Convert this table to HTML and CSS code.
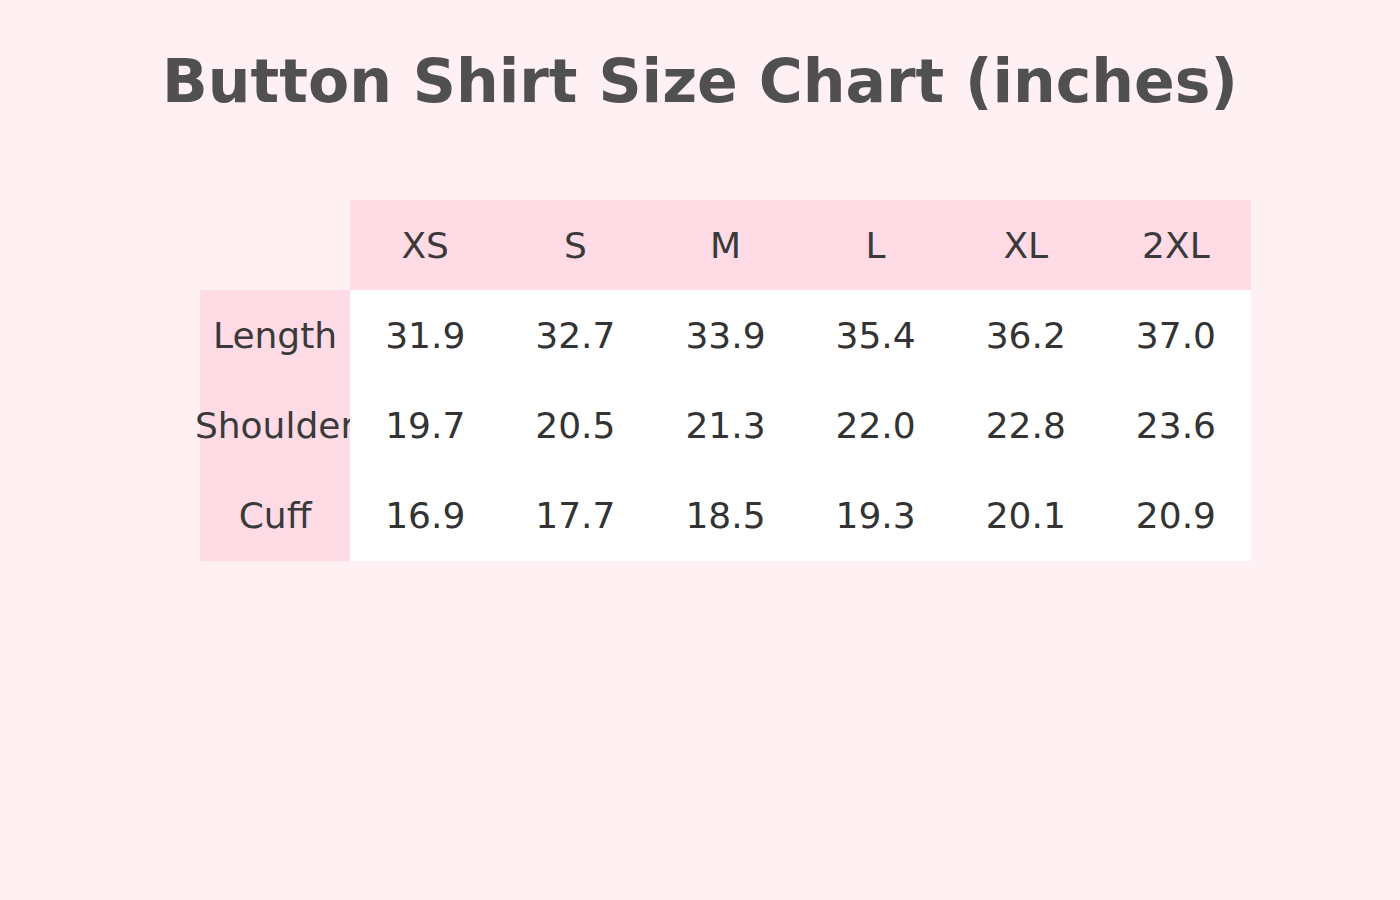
FILE: index.html
```html
<!DOCTYPE html>
<html lang="en">
<head>
    <meta charset="UTF-8">
    <title>Button Shirt Size Chart</title>
    <link rel="stylesheet" href="styles.css">
</head>
<body>

<h1 class="title">Button Shirt Size Chart (inches)</h1>

<div class="chart">
    <div class="cell corner"></div>
    <div class="cell head">XS</div>
    <div class="cell head">S</div>
    <div class="cell head">M</div>
    <div class="cell head">L</div>
    <div class="cell head">XL</div>
    <div class="cell head">2XL</div>

    <div class="cell label">Length</div>
    <div class="cell">31.9</div>
    <div class="cell">32.7</div>
    <div class="cell">33.9</div>
    <div class="cell">35.4</div>
    <div class="cell">36.2</div>
    <div class="cell">37.0</div>

    <div class="cell label">Shoulder</div>
    <div class="cell">19.7</div>
    <div class="cell">20.5</div>
    <div class="cell">21.3</div>
    <div class="cell">22.0</div>
    <div class="cell">22.8</div>
    <div class="cell">23.6</div>

    <div class="cell label">Cuff</div>
    <div class="cell">16.9</div>
    <div class="cell">17.7</div>
    <div class="cell">18.5</div>
    <div class="cell">19.3</div>
    <div class="cell">20.1</div>
    <div class="cell">20.9</div>
</div>

</body>
</html>
```

FILE: styles.css
```css
*{box-sizing:border-box}
body{
    margin:0;
    background:#fff0f4;
    font-family:"DejaVu Sans", sans-serif;
}
.title{
    margin:51px 0 0;
    font-size:60px;
    line-height:60px;
    font-weight:bold;
    color:#505050;
    text-align:center;
}
.chart{
    display:grid;
    grid-template-columns:repeat(7, minmax(0, 1fr));
    grid-auto-rows:90.25px;
    margin:89px 0 0 200px;
    width:1051px;
}
.cell{
    display:flex;
    align-items:center;
    justify-content:center;
    white-space:nowrap;
    min-width:0;
    font-size:36px;
    color:#333333;
    background:#ffffff;
}
.corner{background:transparent}
.head,.label{
    background:#ffdce5;
    color:#3a3a3a;
}
```
